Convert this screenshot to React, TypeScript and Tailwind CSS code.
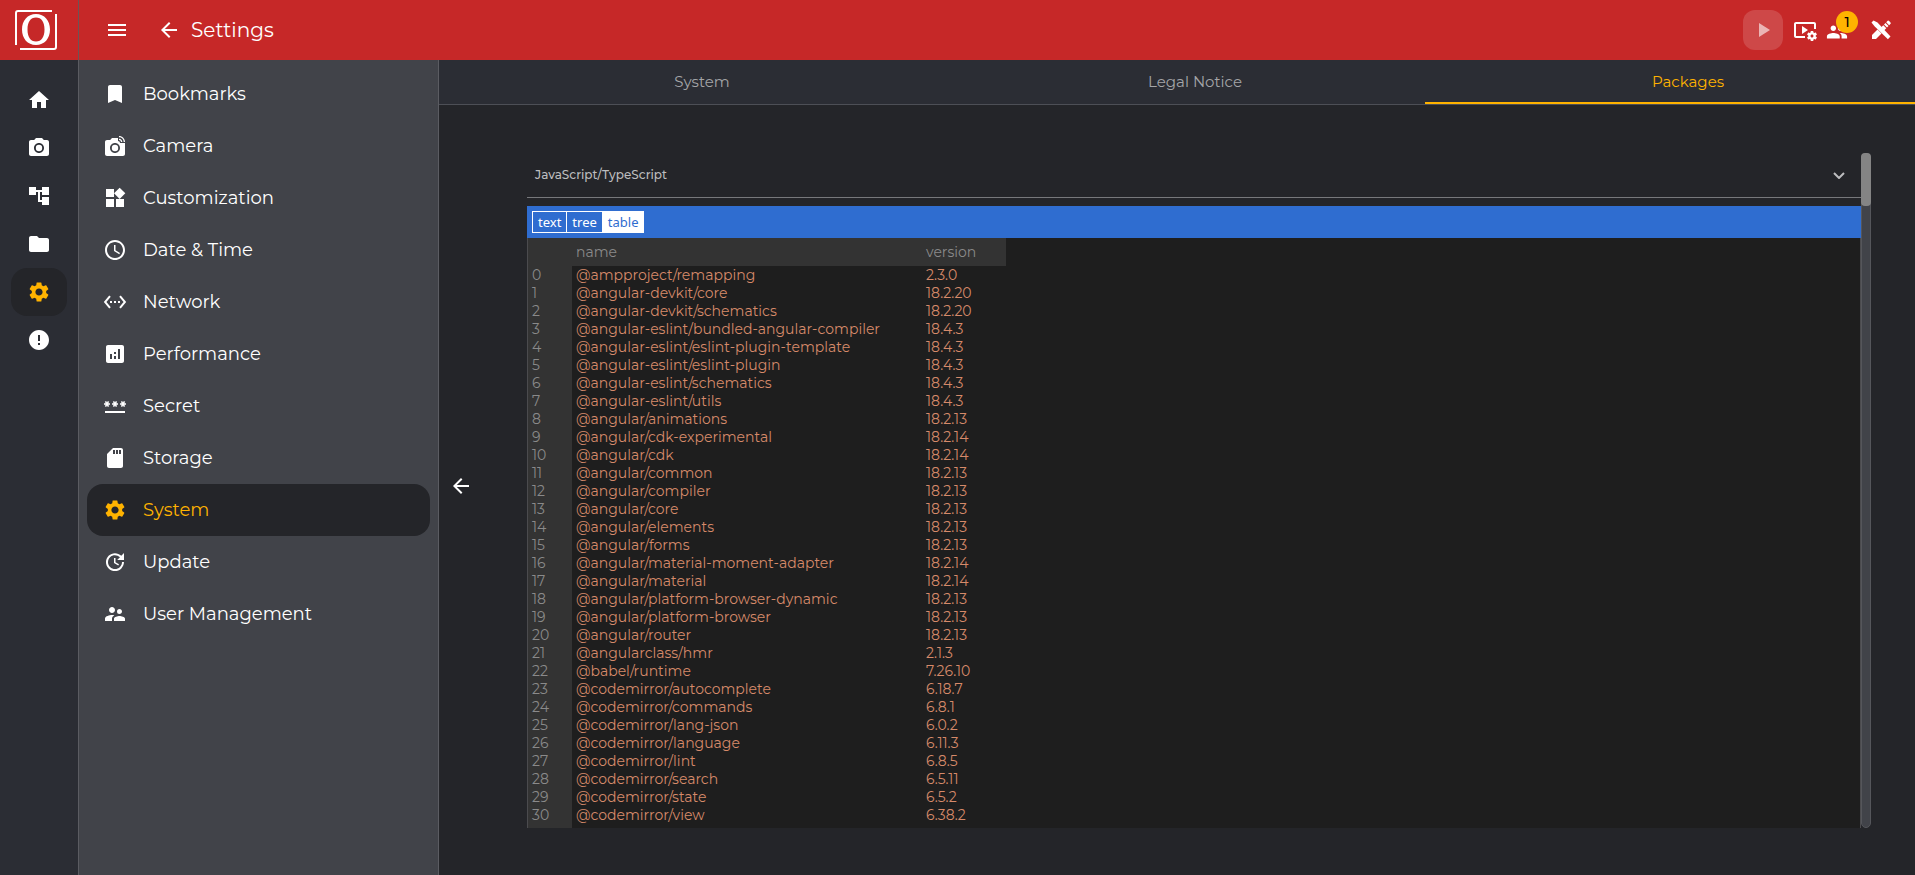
import { useState } from "react";
import type { IconType } from "react-icons";
import {
  MdAccountTree,
  MdAnalytics,
  MdArrowBack,
  MdBookmark,
  MdError,
  MdFolder,
  MdHome,
  MdLinkedCamera,
  MdMenu,
  MdPassword,
  MdPeople,
  MdPhotoCamera,
  MdPlayArrow,
  MdSchedule,
  MdSdCard,
  MdSettings,
  MdSettingsEthernet,
  MdSupervisorAccount,
  MdUpdate,
  MdVideoSettings,
  MdWidgets,
} from "react-icons/md";

interface NavItem {
  label: string;
  icon: IconType;
}

const railItems: NavItem[] = [
  { label: "Home", icon: MdHome },
  { label: "Camera", icon: MdPhotoCamera },
  { label: "Process", icon: MdAccountTree },
  { label: "Files", icon: MdFolder },
  { label: "Settings", icon: MdSettings },
  { label: "Messages", icon: MdError },
];

const menuItems: NavItem[] = [
  { label: "Bookmarks", icon: MdBookmark },
  { label: "Camera", icon: MdLinkedCamera },
  { label: "Customization", icon: MdWidgets },
  { label: "Date & Time", icon: MdSchedule },
  { label: "Network", icon: MdSettingsEthernet },
  { label: "Performance", icon: MdAnalytics },
  { label: "Secret", icon: MdPassword },
  { label: "Storage", icon: MdSdCard },
  { label: "System", icon: MdSettings },
  { label: "Update", icon: MdUpdate },
  { label: "User Management", icon: MdSupervisorAccount },
];

const tabs = ["System", "Legal Notice", "Packages"];

const modes = ["text", "tree", "table"];

const packages: [string, string][] = [
  ["@ampproject/remapping", "2.3.0"],
  ["@angular-devkit/core", "18.2.20"],
  ["@angular-devkit/schematics", "18.2.20"],
  ["@angular-eslint/bundled-angular-compiler", "18.4.3"],
  ["@angular-eslint/eslint-plugin-template", "18.4.3"],
  ["@angular-eslint/eslint-plugin", "18.4.3"],
  ["@angular-eslint/schematics", "18.4.3"],
  ["@angular-eslint/utils", "18.4.3"],
  ["@angular/animations", "18.2.13"],
  ["@angular/cdk-experimental", "18.2.14"],
  ["@angular/cdk", "18.2.14"],
  ["@angular/common", "18.2.13"],
  ["@angular/compiler", "18.2.13"],
  ["@angular/core", "18.2.13"],
  ["@angular/elements", "18.2.13"],
  ["@angular/forms", "18.2.13"],
  ["@angular/material-moment-adapter", "18.2.14"],
  ["@angular/material", "18.2.14"],
  ["@angular/platform-browser-dynamic", "18.2.13"],
  ["@angular/platform-browser", "18.2.13"],
  ["@angular/router", "18.2.13"],
  ["@angularclass/hmr", "2.1.3"],
  ["@babel/runtime", "7.26.10"],
  ["@codemirror/autocomplete", "6.18.7"],
  ["@codemirror/commands", "6.8.1"],
  ["@codemirror/lang-json", "6.0.2"],
  ["@codemirror/language", "6.11.3"],
  ["@codemirror/lint", "6.8.5"],
  ["@codemirror/search", "6.5.11"],
  ["@codemirror/state", "6.5.2"],
  ["@codemirror/view", "6.38.2"],
];

const Logo = () => (
  <svg width="44" height="42" viewBox="0 0 44 42" aria-hidden="true">
    <path d="M1 36V4Q1 2 3 2H37" fill="none" stroke="#fff" strokeWidth="2" />
    <path d="M41 5V38Q41 40 39 40H5" fill="none" stroke="#fff" strokeWidth="2" />
    <path
      fill="#fff"
      fillRule="evenodd"
      d="M21 5C29.500 5 35 11.500 35 20.500S29.500 36 21 36 7 29.500 7 20.500 12.500 5 21 5ZM21 8.500C15.500 8.500 12.500 13 12.500 20.500S15.500 32.500 21 32.500 29.500 28 29.500 20.500 26.500 8.500 21 8.500Z"
    />
  </svg>
);

const ToolsIcon = () => (
  <svg width="24" height="24" viewBox="0 0 24 24" fill="#fff" aria-hidden="true">
    <path d="M2.500 4.500 4.500 2.500 8.500 4.500 21.500 18.500 18.900 21.200 5.500 8.200z" />
    <path d="M3 21V17L8.500 11.500 12.500 15.500 7 21z" />
    <path d="M12 9.500 14.300 7.200 17.300 10.200 15 12.500z" />
    <path d="M15 6.500 16.500 5 19.500 8 18 9.500z" />
    <path d="M17.200 4.300 18.700 2.800Q19.400 2.300 20.100 3L21.500 4.400Q22.100 5 21.600 5.700L20.100 7.200z" />
  </svg>
);

const App = () => {
  const [activeTab, setActiveTab] = useState("Packages");
  const [activeItem, setActiveItem] = useState("System");
  const [mode, setMode] = useState("table");

  return (
    <div className="flex h-screen flex-col overflow-hidden bg-[#242529] font-['Montserrat','Inter',sans-serif] text-white">
      <header className="flex h-[60px] shrink-0 items-center bg-[#c62828]">
        <div className="flex h-full w-[79px] items-center border-r border-[#6d5355] pl-[15px]">
          <Logo />
        </div>
        <button aria-label="Menu" className="ml-[26px]">
          <MdMenu size={24} />
        </button>
        <button aria-label="Back" className="ml-7">
          <MdArrowBack size={24} />
        </button>
        <h1 className="ml-[10px] text-xl">Settings</h1>
        <div className="ml-auto flex items-center pr-[22px]">
          <button
            aria-label="Play"
            className="flex size-10 items-center justify-center rounded-xl bg-white/15 text-white/60"
          >
            <MdPlayArrow size={24} />
          </button>
          <button aria-label="Video settings" className="ml-[10px]">
            <MdVideoSettings size={24} />
          </button>
          <button aria-label="Users" className="relative ml-[9px] pt-1">
            <MdPeople size={22} />
            <span className="absolute -top-1.5 left-2.5 flex size-[22px] items-center justify-center rounded-full bg-[#ffb300] text-sm font-medium text-black">
              1
            </span>
          </button>
          <button aria-label="Tools" className="ml-[21px]">
            <ToolsIcon />
          </button>
        </div>
      </header>

      <div className="flex min-h-0 flex-1">
        <nav className="flex w-[79px] shrink-0 flex-col items-center border-r border-[#5b5c62] bg-[#2b2d34] pt-4">
          {railItems.map(({ label, icon: Icon }) => (
            <a
              key={label}
              href="#"
              aria-label={label}
              className={
                label === "Settings"
                  ? "flex h-12 w-14 items-center justify-center rounded-2xl bg-[#242529] text-[#ffb300]"
                  : "flex h-12 w-14 items-center justify-center"
              }
            >
              <Icon size={24} />
            </a>
          ))}
        </nav>

        <nav className="w-[360px] shrink-0 border-r border-[#5b5c62] bg-[#414349] px-2 pt-2">
          {menuItems.map(({ label, icon: Icon }) => (
            <button
              key={label}
              onClick={() => setActiveItem(label)}
              className={
                activeItem === label
                  ? "flex h-[52px] w-full items-center gap-4 rounded-2xl bg-[#242529] px-4 text-lg text-[#ffb300]"
                  : "flex h-[52px] w-full items-center gap-4 rounded-2xl px-4 text-lg"
              }
            >
              <Icon size={24} />
              {label}
            </button>
          ))}
        </nav>

        <main className="flex min-w-0 flex-1 flex-col">
          <div className="flex h-[45px] shrink-0 gap-[3px] border-b border-[#4d4f56] bg-[#2b2d34]">
            {tabs.map((tab) => (
              <button
                key={tab}
                onClick={() => setActiveTab(tab)}
                className={
                  activeTab === tab
                    ? "flex-1 border-b-2 border-[#ffb300] pt-0.5 pl-9 text-[15px] text-[#ffb300]"
                    : "flex-1 border-b-2 border-transparent pt-0.5 pl-9 text-[15px] text-[#a4a5a8]"
                }
              >
                {tab}
              </button>
            ))}
          </div>

          <div className="flex min-h-0 flex-1">
            <button aria-label="Collapse" className="flex w-11 items-center justify-center pb-2">
              <MdArrowBack size={24} />
            </button>

            <div className="mx-11 mt-12 mb-[47px] flex min-w-0 flex-1">
              <div className="flex min-w-0 flex-1 flex-col overflow-hidden">
                <button className="flex h-[45px] shrink-0 items-center justify-between border-b border-[#77787b] px-2 text-xs font-medium text-[#bdbdbf]">
                  JavaScript/TypeScript
                  <svg width="12" height="8" viewBox="0 0 12 8" fill="none" aria-hidden="true" className="mr-2">
                    <path d="m1 2 5 5 5-5" stroke="#bdbdbf" strokeWidth="2" />
                  </svg>
                </button>

                <div className="mt-2 flex h-8 shrink-0 items-center bg-[#2f6dd0] pl-[5px] font-['Noto_Sans',sans-serif] text-[13px]">
                  {modes.map((m) => (
                    <button
                      key={m}
                      onClick={() => setMode(m)}
                      className={
                        mode === m
                          ? "-ml-px h-[22px] border border-white bg-white px-[5px] leading-5 text-[#2f6dd0] first:ml-0"
                          : "-ml-px h-[22px] border border-white px-[5px] leading-5 first:ml-0"
                      }
                    >
                      {m}
                    </button>
                  ))}
                </div>

                <div className="min-h-0 flex-1 overflow-hidden border-x border-[#4b4b4e] bg-[#1e1e1e]">
                  <table className="w-[478px] table-fixed border-collapse text-left text-sm leading-[18px]">
                    <thead>
                      <tr className="h-7 bg-[#333333] text-[#8a8a8a]">
                        <th className="w-11" />
                        <th className="px-1 font-normal">name</th>
                        <th className="w-[85px] px-[5px] font-normal">version</th>
                      </tr>
                    </thead>
                    <tbody>
                      {packages.map(([name, version], index) => (
                        <tr key={name} className="h-[18px] text-[#d68a6a]">
                          <td className="bg-[#333333] px-1 text-[#8a8a8a]">{index}</td>
                          <td className="px-1">{name}</td>
                          <td className="px-[5px]">{version}</td>
                        </tr>
                      ))}
                      <tr className="h-[18px]">
                        <td className="bg-[#333333]" />
                      </tr>
                    </tbody>
                  </table>
                </div>
              </div>

              {/* Scrollbar */}
              <div className="w-[10px] shrink-0 rounded-full border border-[#55565b] bg-[#414349]">
                <div className="-mx-px -mt-px h-[53px] rounded bg-[#848484]" />
              </div>
            </div>
          </div>
        </main>
      </div>
    </div>
  );
};

export default App;
